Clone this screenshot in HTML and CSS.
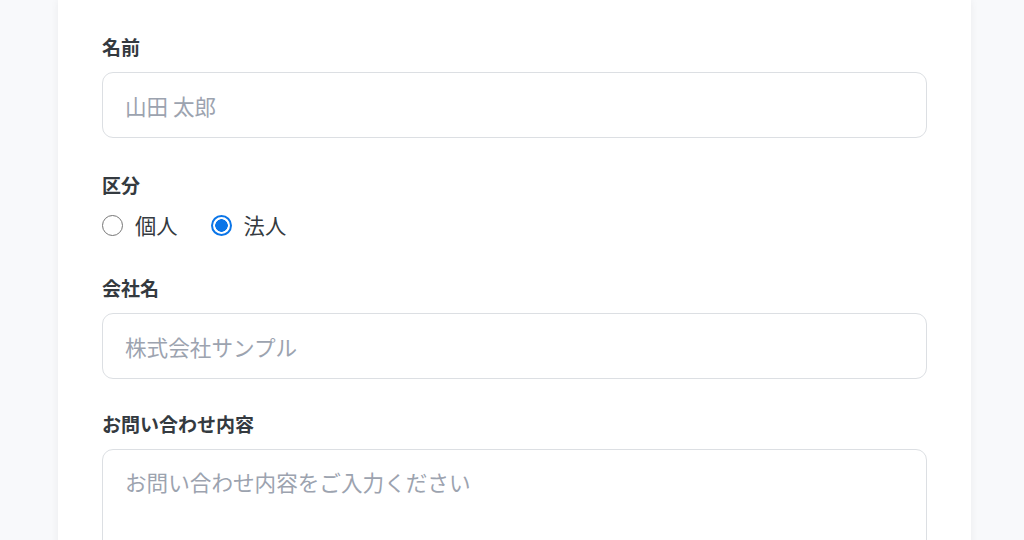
FILE: index.html
```html
<!DOCTYPE html>
<html lang="ja">
<head>
<meta charset="utf-8">
<title>お問い合わせ</title>
<link rel="stylesheet" href="styles.css">
</head>
<body>
<div class="page">
  <form class="card">
    <div class="group">
      <label class="label" for="name">名前</label>
      <input class="input" id="name" type="text" placeholder="山田 太郎">
    </div>
    <div class="group group-radio">
      <div class="label">区分</div>
      <div class="radios">
        <label class="radio"><input type="radio" name="kind"><span>個人</span></label>
        <label class="radio"><input type="radio" name="kind" checked><span>法人</span></label>
      </div>
    </div>
    <div class="group group-tight">
      <label class="label" for="company">会社名</label>
      <input class="input" id="company" type="text" placeholder="株式会社サンプル">
    </div>
    <div class="group">
      <label class="label" for="message">お問い合わせ内容</label>
      <textarea class="textarea" id="message" placeholder="お問い合わせ内容をご入力ください"></textarea>
    </div>
  </form>
</div>
</body>
</html>
```

FILE: styles.css
```css
* { box-sizing: border-box; }
html, body {
  margin: 0;
  padding: 0;
  background: #f8f9fb;
  font-family: "Noto Sans CJK JP", "Noto Sans", sans-serif;
  color: #343a40;
  overflow: hidden;
}
.page {
  padding-left: 58px;
}
.card {
  width: 913px;
  background: #ffffff;
  padding: 33px 44px 40px;
  box-shadow: 0 0 8px rgba(0, 0, 0, 0.06);
  min-height: 600px;
}
.group {
  margin-bottom: 33px;
}
.group-radio {
  margin-bottom: 34px;
}
.group-tight {
  margin-bottom: 31px;
}
.label {
  display: block;
  font-size: 19px;
  line-height: 28px;
  font-weight: 700;
  color: #343a40;
  margin-bottom: 11px;
}
.input, .textarea {
  display: block;
  width: 100%;
  border: 1px solid #dcdfe3;
  border-radius: 11px;
  background: #fff;
  font-family: inherit;
  font-size: 21.6px;
  color: #343a40;
  outline: none;
}
.input {
  height: 66px;
  padding: 0 22px;
}
.textarea {
  height: 200px;
  padding: 16px 22px;
  line-height: 32px;
  resize: none;
}
.input::placeholder, .textarea::placeholder {
  color: #9ca3af;
}
.radios {
  display: flex;
  align-items: center;
  gap: 33px;
  height: 30px;
}
.radio {
  display: flex;
  align-items: center;
  gap: 12px;
  font-size: 21.3px;
  line-height: 30px;
  color: #343a40;
}
.radio input {
  appearance: none;
  -webkit-appearance: none;
  margin: 0;
  width: 21px;
  height: 21px;
  border: 1.5px solid #767676;
  border-radius: 50%;
  background: #fff;
}
.radio input:checked {
  border: 2px solid #0a75e8;
  background: radial-gradient(circle, #0a75e8 0 6px, #ffffff 6.5px);
}
```
